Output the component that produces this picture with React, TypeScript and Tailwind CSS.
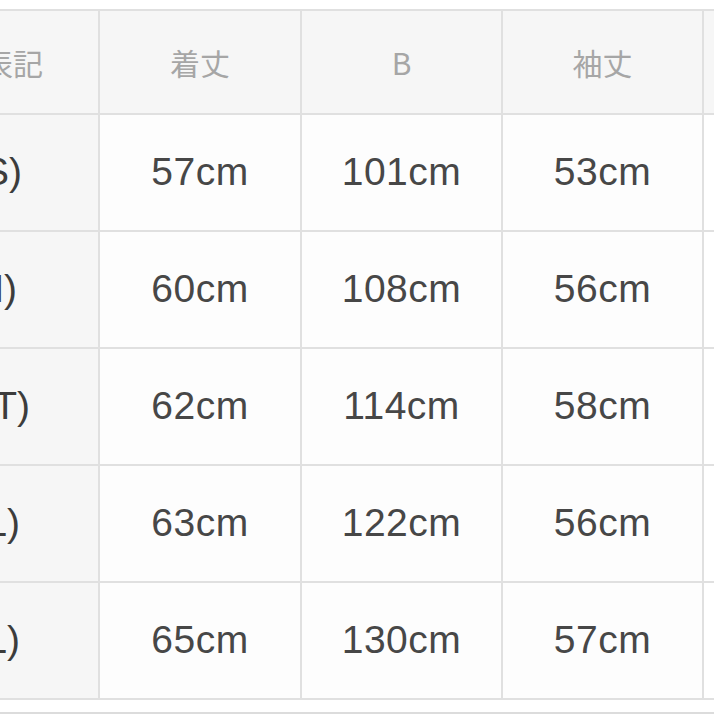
import React from "react";

const rows = [
  { size: "(S)", pad: "pr-[76px]", vals: ["57cm", "101cm", "53cm"] },
  { size: "(M)", pad: "pr-[81px]", vals: ["60cm", "108cm", "56cm"] },
  { size: "(LT)", pad: "pr-[68px]", vals: ["62cm", "114cm", "58cm"] },
  { size: "(L)", pad: "pr-[78px]", vals: ["63cm", "122cm", "56cm"] },
  { size: "(XL)", pad: "pr-[78px]", vals: ["65cm", "130cm", "57cm"] },
];

export default function App() {
  return (
    <div className="w-[714px] h-[714px] overflow-hidden bg-white relative">
      <div className="pt-[9px]">
        <table
          className="border-collapse ml-[-136px] table-fixed w-[1039px]"
          style={{ fontFamily: '"Liberation Sans", Arial, "Noto Sans CJK JP", sans-serif' }}
        >
          <colgroup>
            <col className="w-[234px]" />
            <col className="w-[202px]" />
            <col className="w-[201px]" />
            <col className="w-[201px]" />
            <col className="w-[201px]" />
          </colgroup>
          <thead>
            <tr className="h-[104px] bg-[#f6f6f6]">
              <th
                className="border-2 border-[#e0e0e0] text-right align-middle font-normal text-[30px] text-[#a6a6a6] p-0 pr-[55px]"
                style={{ fontFamily: '"Noto Sans CJK JP", "Liberation Sans", sans-serif' }}
              >
                寸法表記
              </th>
              {["着丈", "B", "袖丈", ""].map((h, i) => (
                <th
                  key={i}
                  className="border-2 border-[#e0e0e0] text-center align-middle font-normal text-[30px] text-[#a6a6a6] p-0"
                  style={{ fontFamily: '"Noto Sans CJK JP", "Liberation Sans", sans-serif' }}
                >
                  {h}
                </th>
              ))}
            </tr>
          </thead>
          <tbody>
            {rows.map((r, ri) => (
              <tr key={ri} className="h-[117px]">
                <td
                  className={`border-2 border-[#e0e0e0] bg-[#f6f6f6] text-right align-middle text-[39px] text-[#3c3c3c] p-0 whitespace-nowrap ${r.pad}`}
                >
                  {r.size}
                </td>
                {r.vals.map((c, ci) => (
                  <td
                    key={ci}
                    className="border-2 border-[#e0e0e0] bg-[#fdfdfd] text-center align-middle text-[39px] text-[#474747] p-0 tracking-[0.5px]"
                  >
                    {c}
                  </td>
                ))}
                <td className="border-2 border-[#e0e0e0] bg-white p-0"></td>
              </tr>
            ))}
          </tbody>
        </table>
        <div className="mt-[12px] border-t-2 border-[#dcdcdc]" />
      </div>
    </div>
  );
}
